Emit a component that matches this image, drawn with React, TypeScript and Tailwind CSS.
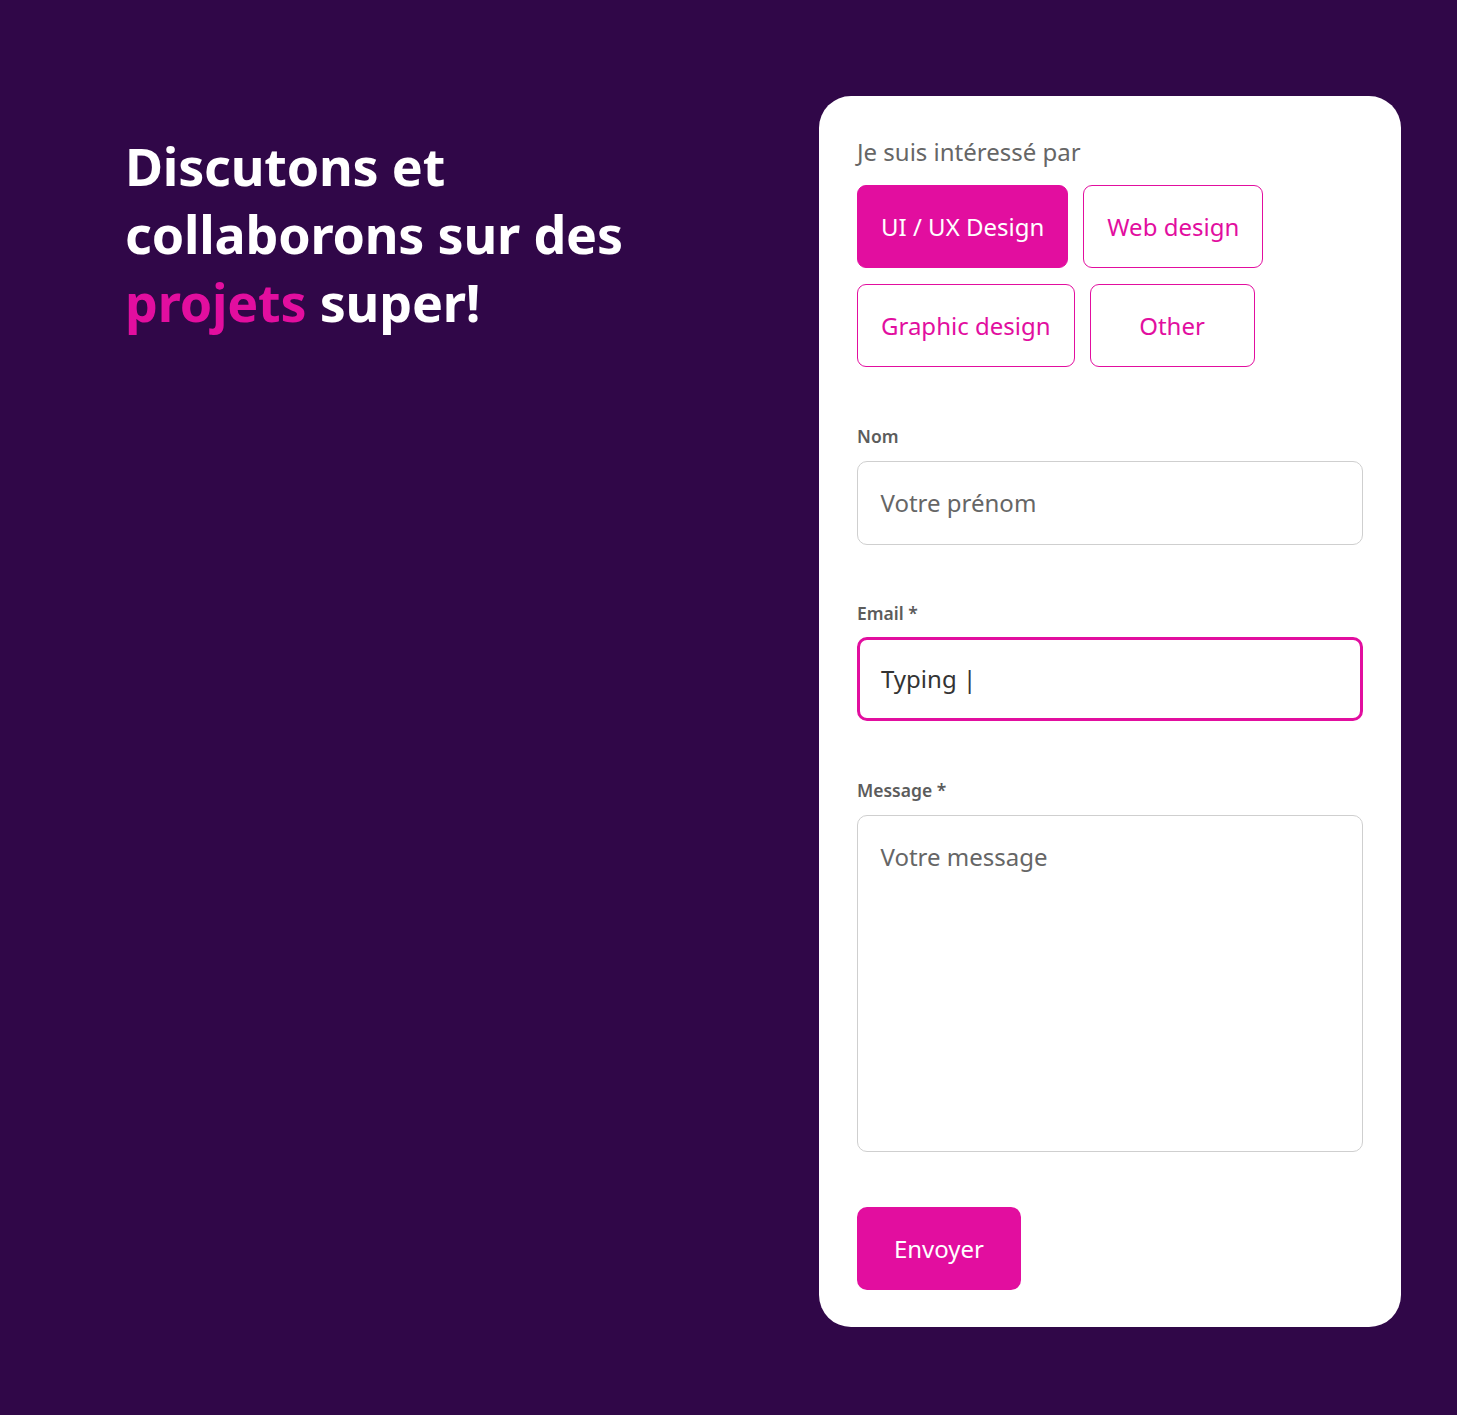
const options = ["UI / UX Design", "Web design", "Graphic design", "Other"];

export default function App() {
  const selected = "UI / UX Design";

  return (
    <div
      className="flex min-h-[1415px] w-full bg-[#300748] pt-[96px] pb-[88px]"
      style={{ fontFamily: '"Noto Sans", "Open Sans", sans-serif' }}
    >
      <div className="flex-1 pl-[125px] pt-[36px]">
        <h1 className="text-[52px] font-bold leading-[68px] tracking-[-0.2px] text-white">
          Discutons et
          <br />
          collaborons sur des
          <br />
          <span className="text-[#e20e9f]">projets</span> super!
        </h1>
      </div>

      <form className="mr-[56px] w-[582px] rounded-[32px] bg-white px-[38px] pt-[38px] pb-[37px]">
        <p className="text-[24px] leading-[36px] text-[#666666]">Je suis intéressé par</p>

        <div className="mt-[15px] flex w-[420px] flex-wrap gap-x-[15px] gap-y-[16px]">
          {options.map((option) => (
            <button
              key={option}
              type="button"
              className={
                option === selected
                  ? "h-[83px] min-w-[165px] rounded-[9px] border-[1.5px] border-[#e20e9f] bg-[#e20e9f] px-[23px] text-[24px] text-white"
                  : "h-[83px] min-w-[165px] rounded-[9px] border-[1.5px] border-[#e20e9f] bg-white px-[23px] text-[24px] text-[#e20e9f]"
              }
            >
              {option}
            </button>
          ))}
        </div>

        <label className="mt-[57px] block text-[17.5px] font-semibold leading-[24px] text-[#5c5c5c]">
          Nom
        </label>
        <div className="mt-[13px] flex h-[84px] items-center rounded-[10px] border-[1.5px] border-[#cfcfcf] pl-[22.5px] text-[24px] text-[#666666]">
          Votre prénom
        </div>

        <label className="mt-[56px] block text-[17.5px] font-semibold leading-[24px] text-[#5c5c5c]">
          Email *
        </label>
        <div className="mt-[12px] flex h-[84px] items-center rounded-[10px] border-[3px] border-[#e20e9f] pl-[21px] text-[24px] text-[#333333]">
          Typing |
        </div>

        <label className="mt-[57px] block text-[17.5px] font-semibold leading-[24px] text-[#5c5c5c]">
          Message *
        </label>
        <div className="mt-[13px] h-[337px] rounded-[10px] border-[1.5px] border-[#cfcfcf] pl-[22.5px] pt-[23px] text-[24px] text-[#666666]">
          Votre message
        </div>

        <button
          type="button"
          className="mt-[55px] h-[83px] w-[164px] rounded-[10px] bg-[#e20e9f] text-[24px] text-white"
        >
          Envoyer
        </button>
      </form>
    </div>
  );
}
